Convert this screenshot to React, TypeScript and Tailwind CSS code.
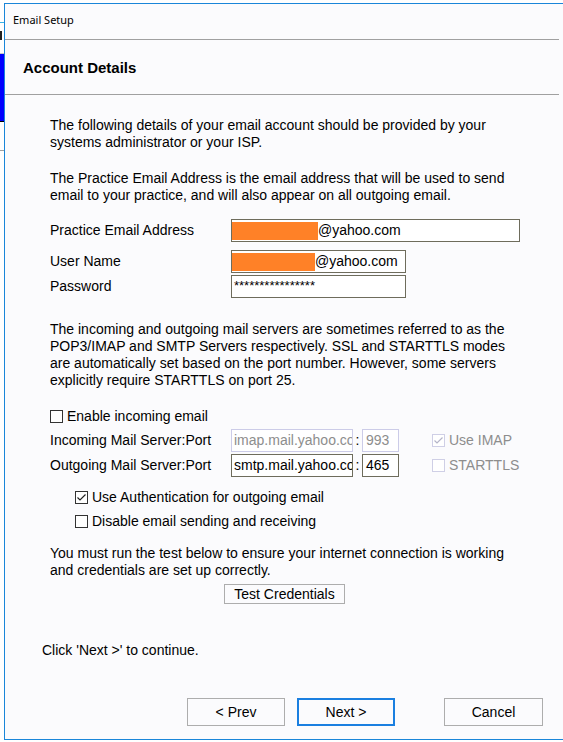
import React from 'react';

const body = "font-['Liberation_Sans',Arial,sans-serif] text-[14px] leading-[17px] text-black";

function Check({ checked = false, disabled = false }: { checked?: boolean; disabled?: boolean }) {
  return (
    <span
      className={`flex h-[13px] w-[13px] shrink-0 items-center justify-center border bg-white ${
        disabled ? 'border-[#cfcfe6]' : 'border-[#333333]'
      }`}
    >
      {checked && (
        <svg viewBox="0 0 11 11" className="h-[11px] w-[11px]">
          <polyline
            points="1.5,5.5 4,8 9.5,2.5"
            fill="none"
            stroke={disabled ? '#b4b4c8' : '#222222'}
            strokeWidth="1.2"
          />
        </svg>
      )}
    </span>
  );
}

function CheckRow({ label, checked, disabled, className = '' }: { label: string; checked?: boolean; disabled?: boolean; className?: string }) {
  return (
    <div className={`flex h-[13px] items-center gap-[4px] ${className}`}>
      <Check checked={checked} disabled={disabled} />
      <span className={`whitespace-nowrap leading-[13px] ${disabled ? 'text-[#8d8d8d]' : 'text-black'}`}>{label}</span>
    </div>
  );
}

function Field({ width, children, disabled = false }: { width: string; children: React.ReactNode; disabled?: boolean }) {
  return (
    <div
      className={`flex h-[23px] items-center overflow-hidden whitespace-nowrap border bg-white ${width} ${
        disabled ? 'border-[#cccce8] text-[#8d8d8d]' : 'border-[#6e6c5c] text-black'
      }`}
    >
      {children}
    </div>
  );
}

function Redacted({ width }: { width: string }) {
  return (
    <div className="flex h-[23px] items-center">
      <span className={`block h-[18px] bg-[#ff8127] ${width}`} />
      <span>@yahoo.com</span>
    </div>
  );
}

function Btn({ label, primary = false, width = 'w-[98px]' }: { label: string; primary?: boolean; width?: string }) {
  return (
    <button
      className={`flex h-[28px] items-center justify-center bg-[#fbfbfd] ${width} ${
        primary ? 'border-2 border-[#1a7fe0]' : 'border border-[#adadad]'
      }`}
    >
      {label}
    </button>
  );
}

export default function App() {
  return (
    <div className={`flex h-[742px] w-[563px] overflow-hidden bg-white ${body}`}>
      {/* bits of the window behind */}
      <div className="flex w-[4px] shrink-0 flex-col">
        <div className="h-[22px]" />
        <div className="h-px bg-[#3bb3e6]" />
        <div className="h-[8px]" />
        <div className="ml-0 h-[9px] w-[2px] bg-[#222]" />
        <div className="h-[13px]" />
        <div className="h-px bg-[#c8c8c8]" />
        <div className="h-[67px] bg-[#0000ff]" />
        <div className="h-px bg-black" />
        <div className="h-[28px]" />
        <div className="h-px bg-[#a0a0a0]" />
      </div>

      <div className="mt-[3px] flex h-[737px] flex-1 flex-col border-b border-l border-t border-[#1a86d9] bg-[#fbfbfd]">
        <div className="flex h-[35px] items-start pl-[8px] pt-[9px]">
          <span className="font-['Noto_Sans',sans-serif] text-[11px] leading-[14px]">Email Setup</span>
        </div>
        <div className="h-px w-[554px] bg-[#a0a0a0]" />
        <div className="flex h-[54px] items-center pl-[18px] pt-px">
          <span className="text-[15px] font-bold leading-[18px]">Account Details</span>
        </div>
        <div className="h-px w-[554px] bg-[#a0a0a0]" />

        <div className="flex flex-col pl-[45px]">
          <p className="mt-[22px] whitespace-nowrap">
            The following details of your email account should be provided by your
            <br />
            systems administrator or your ISP.
          </p>
          <p className="mt-[19px] whitespace-nowrap">
            The Practice Email Address is the email address that will be used to send
            <br />
            email to your practice, and will also appear on all outgoing email.
          </p>

          <div className="mt-[15px] flex items-center">
            <span className="w-[181px]">Practice Email Address</span>
            <Field width="w-[289px]">
              <Redacted width="w-[86px]" />
            </Field>
          </div>
          <div className="mt-[8px] flex items-center">
            <span className="w-[181px]">User Name</span>
            <Field width="w-[175px]">
              <Redacted width="w-[83px]" />
            </Field>
          </div>
          <div className="mt-[2px] flex items-center">
            <span className="w-[181px]">Password</span>
            <Field width="w-[175px]">
              <span className="pb-[3px] pl-[2px] text-[13px]">****************</span>
            </Field>
          </div>

          <p className="mt-[23px] whitespace-nowrap">
            The incoming and outgoing mail servers are sometimes referred to as the
            <br />
            POP3/IMAP and SMTP Servers respectively. SSL and STARTTLS modes
            <br />
            are automatically set based on the port number. However, some servers
            <br />
            explicitly require STARTTLS on port 25.
          </p>

          <CheckRow label="Enable incoming email" className="mt-[21px]" />

          <div className="mt-[6px] flex items-center">
            <span className="w-[181px] whitespace-nowrap">Incoming Mail Server:Port</span>
            <Field width="w-[122px]" disabled>
              <span className="pl-[2px]">imap.mail.yahoo.co</span>
            </Field>
            <span className="w-[9px] text-center">:</span>
            <Field width="w-[37px]" disabled>
              <span className="pl-[3px]">993</span>
            </Field>
            <CheckRow label="Use IMAP" checked disabled className="ml-[33px]" />
          </div>
          <div className="mt-[2px] flex items-center">
            <span className="w-[181px] whitespace-nowrap">Outgoing Mail Server:Port</span>
            <Field width="w-[122px]">
              <span className="pl-[2px]">smtp.mail.yahoo.co</span>
            </Field>
            <span className="w-[9px] text-center">:</span>
            <Field width="w-[37px]">
              <span className="pl-[3px]">465</span>
            </Field>
            <CheckRow label="STARTTLS" disabled className="ml-[33px]" />
          </div>

          <CheckRow label="Use Authentication for outgoing email" checked className="ml-[25px] mt-[14px]" />
          <CheckRow label="Disable email sending and receiving" className="ml-[25px] mt-[11px]" />

          <p className="mt-[17px] whitespace-nowrap">
            You must run the test below to ensure your internet connection is working
            <br />
            and credentials are set up correctly.
          </p>
          <button className="ml-[174px] mt-[5px] flex h-[20px] w-[121px] items-center justify-center border border-[#adadad] bg-[#fbfbfd]">
            Test Credentials
          </button>
        </div>

        <p className="mt-[38px] pl-[37px]">Click 'Next &gt;' to continue.</p>

        <div className="mt-[39px] flex pl-[182px]">
          <Btn label="< Prev" width="w-[98px]" />
          <div className="w-[12px]" />
          <Btn label="Next >" primary width="w-[98px]" />
          <div className="w-[49px]" />
          <Btn label="Cancel" width="w-[99px]" />
        </div>
      </div>
    </div>
  );
}
